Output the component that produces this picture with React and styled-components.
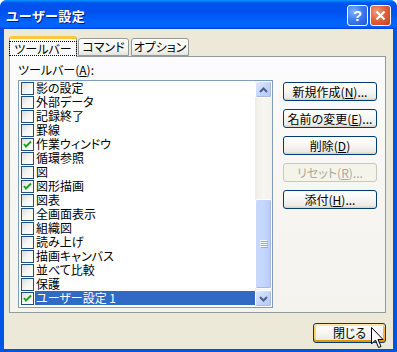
import React from 'react';
import styled, { createGlobalStyle } from 'styled-components';

const GlobalStyle = createGlobalStyle`
    html, body {
        margin: 0;
        padding: 0;
        background: #ffffff;
    }
    body {
        font-family: 'Noto Sans CJK JP', 'Noto Sans', sans-serif;
        font-size: 12px;
        font-feature-settings: 'palt';
    }
`;

const Window = styled.div`
    position: relative;
    width: 397px;
    height: 352px;
    box-sizing: border-box;
    display: flex;
    flex-direction: column;
    background: #0054e3;
    border-radius: 7px 7px 0 0;
    overflow: hidden;
`;

const TitleBar = styled.div`
    height: 29px;
    flex: none;
    display: flex;
    align-items: center;
    justify-content: space-between;
    padding: 0 6px 0 6px;
    background: linear-gradient(180deg, #0997ff 0%, #0053ee 10%, #0050ee 40%, #0063fb 75%, #0066ff 90%, #005bff 94%, #003dd7 100%);
`;

const Title = styled.div`
    color: #ffffff;
    font-weight: bold;
    font-size: 13px;
    letter-spacing: 0.5px;
    text-shadow: 1px 1px 0 #0a1883;
    padding-top: 1px;
`;

const CaptionButtons = styled.div`
    display: flex;
    gap: 2px;
    padding-top: 1px;
`;

const CaptionButton = styled.div`
    width: 21px;
    height: 21px;
    box-sizing: border-box;
    border: 1px solid #ffffff;
    border-radius: 3px;
    display: flex;
    align-items: center;
    justify-content: center;
    color: #ffffff;
    font-family: 'Liberation Sans', sans-serif;
    font-weight: bold;
    font-size: 15px;
    background: ${p => p.kind === 'close'
        ? 'radial-gradient(circle at 30% 30%, #f09e7e 0%, #e2623d 45%, #c4401b 100%)'
        : 'radial-gradient(circle at 30% 30%, #7fb2ff 0%, #3b7ef0 45%, #2055d6 100%)'};
`;

const Body = styled.div`
    flex: 1;
    margin: 0 4px 3px 4px;
    background: #ece9d8;
    display: flex;
    flex-direction: column;
    padding: 6px 7px 0 5px;
`;

const Tabs = styled.div`
    display: flex;
    align-items: flex-end;
    height: 21px;
    position: relative;
    z-index: 1;
`;

const Tab = styled.div`
    box-sizing: border-box;
    height: ${p => p.active ? '21px' : '18px'};
    width: ${p => p.w}px;
    margin-right: ${p => p.active ? '1px' : '2px'};
    margin-bottom: ${p => p.active ? '-1px' : '0'};
    border: 1px solid #919b9c;
    border-bottom: ${p => p.active ? 'none' : '1px solid #919b9c'};
    border-top: ${p => p.active ? '3px solid #ffc83c' : '1px solid #919b9c'};
    border-radius: 3px 3px 0 0;
    background: ${p => p.active ? '#fcfcfe' : 'linear-gradient(180deg, #ffffff 0%, #f3f3ef 70%, #e4e2d9 100%)'};
    display: flex;
    align-items: center;
    justify-content: center;
    color: #000000;
    line-height: 14px;
    white-space: nowrap;
`;

const FocusText = styled.span`
    outline: 1px dotted #000000;
    padding: 0 4px;
    line-height: 13px;
`;

const Panel = styled.div`
    width: 377px;
    height: 257px;
    box-sizing: border-box;
    border: 1px solid #919b9c;
    background: linear-gradient(180deg, #fcfcfe 0%, #f6f5f1 60%, #f4f3ee 100%);
    padding: 6px 8px 0 8px;
    display: flex;
    flex-direction: column;
`;

const Label = styled.div`
    height: 14px;
    line-height: 14px;
    margin-bottom: 3px;
    color: #000000;
`;

const PanelRow = styled.div`
    display: flex;
    gap: 10px;
`;

const ListBox = styled.div`
    width: 255px;
    height: 228px;
    box-sizing: border-box;
    border: 1px solid #7f9db9;
    background: #ffffff;
    display: flex;
`;

const Items = styled.div`
    flex: 1;
    display: flex;
    flex-direction: column;
`;

const Row = styled.div`
    height: 14px;
    display: flex;
    align-items: center;
    padding-left: 2px;
`;

const CheckBox = styled.div`
    width: 13px;
    height: 13px;
    box-sizing: border-box;
    border: 1px solid #1c5180;
    background: linear-gradient(135deg, #dcdcd7 0%, #f5f5f2 50%, #ffffff 100%);
    margin-right: 1px;
    display: flex;
    align-items: center;
    justify-content: center;
    flex: none;
`;

const RowText = styled.div`
    flex: 1;
    height: 14px;
    line-height: 14px;
    padding-left: 1px;
    white-space: nowrap;
    color: ${p => p.selected ? '#ffffff' : '#000000'};
    background: ${p => p.selected ? '#316ac5' : 'transparent'};
`;

const ScrollBar = styled.div`
    width: 17px;
    display: flex;
    flex-direction: column;
    background: linear-gradient(90deg, #eeede5 0%, #f7f6f1 50%, #f3f1ec 100%);
`;

const ScrollButton = styled.div`
    height: 17px;
    flex: none;
    box-sizing: border-box;
    border: 1px solid #ffffff;
    border-radius: 2px;
    background: linear-gradient(135deg, #e1eafe 0%, #c4d6fc 50%, #b4c8f6 100%);
    box-shadow: inset -1px -1px 0 #a8bbe8;
    display: flex;
    align-items: center;
    justify-content: center;
`;

const Track = styled.div`
    flex: 1;
    display: flex;
    flex-direction: column;
    justify-content: flex-end;
    padding-bottom: 1px;
`;

const Thumb = styled.div`
    height: 90px;
    box-sizing: border-box;
    border: 1px solid #ffffff;
    border-radius: 2px;
    background: linear-gradient(90deg, #c9d8fc 0%, #c6d7fd 50%, #b6cbf7 100%);
    box-shadow: inset -1px -1px 0 #a6b9e6;
    display: flex;
    align-items: center;
    justify-content: center;
`;

const ButtonColumn = styled.div`
    display: flex;
    flex-direction: column;
    gap: 8px;
    padding-top: 2px;
`;

const Button = styled.div`
    width: ${p => p.w || 94}px;
    height: ${p => p.h || 19}px;
    box-sizing: border-box;
    border: 1px solid ${p => p.disabled ? '#c9c7ba' : '#003c74'};
    border-radius: 3px;
    display: flex;
    align-items: center;
    justify-content: center;
    color: ${p => p.disabled ? '#aca899' : '#000000'};
    background: ${p => p.disabled ? '#f5f4ea' : 'linear-gradient(180deg, #ffffff 0%, #f6f6f3 50%, #ecebe5 85%, #d6d0c5 100%)'};
    box-shadow: ${p => p.hot ? 'inset 0 2px 0 #ffe7a2, inset 0 -2px 0 #e59700, inset 2px 0 0 #fbd468, inset -2px 0 0 #f4b33c' : 'none'};
    line-height: 14px;
    white-space: nowrap;
`;

const Footer = styled.div`
    display: flex;
    justify-content: flex-end;
    padding-top: 10px;
`;

const Cursor = styled.svg`
    position: absolute;
    left: 371px;
    top: 327px;
`;

const Check = () => (
    <svg width="9" height="9" viewBox="0 0 9 9">
        <path d="M1 4 L3 6.5 L8 1.5" stroke="#21a121" strokeWidth="2" fill="none" />
    </svg>
);

const Chevron = ({ down }) => (
    <svg width="9" height="6" viewBox="0 0 9 6">
        <path d={down ? 'M1 1 L4.5 4.5 L8 1' : 'M1 5 L4.5 1.5 L8 5'} stroke="#4d6185" strokeWidth="2" fill="none" />
    </svg>
);

const Grip = () => (
    <svg width="8" height="8" viewBox="0 0 8 8">
        {[0, 2, 4, 6].map(y => (
            <line key={y} x1="0" y1={y + 0.5} x2="7" y2={y + 0.5} stroke="#eef4fe" />
        ))}
        {[1, 3, 5, 7].map(y => (
            <line key={y} x1="1" y1={y + 0.5} x2="8" y2={y + 0.5} stroke="#8cb0f8" />
        ))}
    </svg>
);

const toolbars = [
    { name: '影の設定' },
    { name: '外部データ' },
    { name: '記録終了' },
    { name: '罫線' },
    { name: '作業ウィンドウ', checked: true },
    { name: '循環参照' },
    { name: '図' },
    { name: '図形描画', checked: true },
    { name: '図表' },
    { name: '全画面表示' },
    { name: '組織図' },
    { name: '読み上げ' },
    { name: '描画キャンバス' },
    { name: '並べて比較' },
    { name: '保護' },
    { name: 'ユーザー設定 1', checked: true, selected: true },
];

const actions = [
    { label: '新規作成(', key: 'N', tail: ')...' },
    { label: '名前の変更(', key: 'E', tail: ')...' },
    { label: '削除(', key: 'D', tail: ')' },
    { label: 'リセット(', key: 'R', tail: ')...', disabled: true },
    { label: '添付(', key: 'H', tail: ')...' },
];

export default function App() {
    return (
        <>
            <GlobalStyle />
            <Window>
                <TitleBar>
                    <Title>ユーザー設定</Title>
                    <CaptionButtons>
                        <CaptionButton kind="help">?</CaptionButton>
                        <CaptionButton kind="close">
                            <svg width="11" height="11" viewBox="0 0 11 11">
                                <path d="M1.5 1.5 L9.5 9.5 M9.5 1.5 L1.5 9.5" stroke="#ffffff" strokeWidth="2.2" />
                            </svg>
                        </CaptionButton>
                    </CaptionButtons>
                </TitleBar>
                <Body>
                    <Tabs>
                        <Tab active w={68}><FocusText>ツールバー</FocusText></Tab>
                        <Tab w={51}>コマンド</Tab>
                        <Tab w={58}>オプション</Tab>
                    </Tabs>
                    <Panel>
                        <Label>ツールバー(<u>A</u>):</Label>
                        <PanelRow>
                            <ListBox>
                                <Items>
                                    {toolbars.map(t => (
                                        <Row key={t.name}>
                                            <CheckBox>{t.checked && <Check />}</CheckBox>
                                            <RowText selected={t.selected}>{t.name}</RowText>
                                        </Row>
                                    ))}
                                </Items>
                                <ScrollBar>
                                    <ScrollButton><Chevron /></ScrollButton>
                                    <Track>
                                        <Thumb><Grip /></Thumb>
                                    </Track>
                                    <ScrollButton><Chevron down /></ScrollButton>
                                </ScrollBar>
                            </ListBox>
                            <ButtonColumn>
                                {actions.map(a => (
                                    <Button key={a.key} disabled={a.disabled}>
                                        {a.label}<u>{a.key}</u>{a.tail}
                                    </Button>
                                ))}
                            </ButtonColumn>
                        </PanelRow>
                    </Panel>
                    <Footer>
                        <Button hot w={73} h={20}>閉じる</Button>
                    </Footer>
                </Body>
                <Cursor width="13" height="22" viewBox="0 0 13 22">
                    <path d="M0.5 0.5 L0.5 17 L4.5 13 L7.5 20.5 L10 19.5 L7 12.5 L12 12.5 Z" fill="#ffffff" stroke="#000000" strokeWidth="1" />
                </Cursor>
            </Window>
        </>
    );
}
